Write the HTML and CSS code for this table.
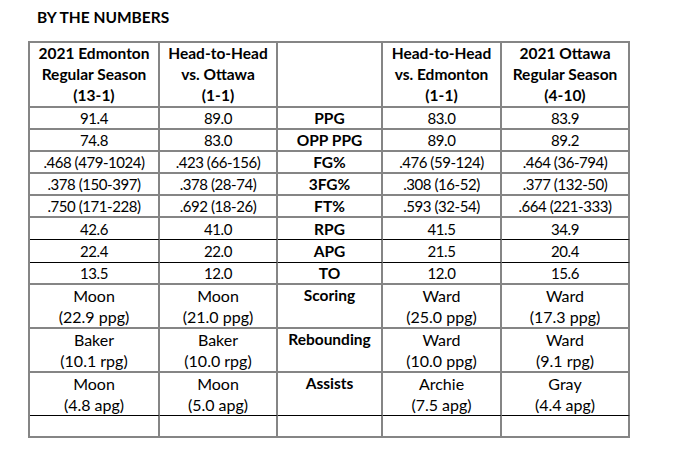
FILE: index.html
```html
<!DOCTYPE html>
<html>
<head>
<meta charset="utf-8">
<link rel="stylesheet" href="styles.css">
</head>
<body>
<div class="page">
  <h1 class="title">BY THE NUMBERS</h1>
  <table class="stats">
    <colgroup>
      <col class="c1"><col class="c2"><col class="c3"><col class="c4"><col class="c5">
    </colgroup>
    <tr class="head">
      <th>2021 Edmonton<br>Regular Season<br>(13-1)</th>
      <th>Head-to-Head<br>vs. Ottawa<br>(1-1)</th>
      <th></th>
      <th>Head-to-Head<br>vs. Edmonton<br>(1-1)</th>
      <th>2021 Ottawa<br>Regular Season<br>(4-10)</th>
    </tr>
    <tr class="row"><td>91.4</td><td>89.0</td><td class="lbl">PPG</td><td>83.0</td><td>83.9</td></tr>
    <tr class="row"><td>74.8</td><td>83.0</td><td class="lbl">OPP PPG</td><td>89.0</td><td>89.2</td></tr>
    <tr class="row"><td>.468 (479-1024)</td><td>.423 (66-156)</td><td class="lbl">FG%</td><td>.476 (59-124)</td><td>.464 (36-794)</td></tr>
    <tr class="row"><td>.378 (150-397)</td><td>.378 (28-74)</td><td class="lbl">3FG%</td><td>.308 (16-52)</td><td>.377 (132-50)</td></tr>
    <tr class="row"><td>.750 (171-228)</td><td>.692 (18-26)</td><td class="lbl">FT%</td><td>.593 (32-54)</td><td>.664 (221-333)</td></tr>
    <tr class="row dk"><td>42.6</td><td>41.0</td><td class="lbl">RPG</td><td>41.5</td><td>34.9</td></tr>
    <tr class="row dk tall"><td>22.4</td><td>22.0</td><td class="lbl">APG</td><td>21.5</td><td>20.4</td></tr>
    <tr class="row"><td>13.5</td><td>12.0</td><td class="lbl">TO</td><td>12.0</td><td>15.6</td></tr>
    <tr class="big"><td>Moon<br>(22.9 ppg)</td><td>Moon<br>(21.0 ppg)</td><td class="lbl">Scoring</td><td>Ward<br>(25.0 ppg)</td><td>Ward<br>(17.3 ppg)</td></tr>
    <tr class="big"><td>Baker<br>(10.1 rpg)</td><td>Baker<br>(10.0 rpg)</td><td class="lbl">Rebounding</td><td>Ward<br>(10.0 ppg)</td><td>Ward<br>(9.1 rpg)</td></tr>
    <tr class="big dk"><td>Moon<br>(4.8 apg)</td><td>Moon<br>(5.0 apg)</td><td class="lbl">Assists</td><td>Archie<br>(7.5 apg)</td><td>Gray<br>(4.4 apg)</td></tr>
    <tr class="row"><td></td><td></td><td></td><td></td><td></td></tr>
  </table>
</div>
</body>
</html>
```

FILE: styles.css
```css
html, body {
  margin: 0;
  padding: 0;
  background: #ffffff;
}

body {
  font-family: Lato, "Open Sans", sans-serif;
  color: #000;
}

.page {
  padding: 7px 0 0 28px;
}

.title {
  margin: 0 0 12px 9px;
  font-size: 15.5px;
  line-height: 21.5px;
  font-weight: bold;
}

.stats {
  border-collapse: separate;
  border-spacing: 0;
  table-layout: fixed;
  width: 602px;
  border-top: 2px solid #858585;
  border-left: 2px solid #858585;
  font-size: 16px;
}

.c1 { width: 130px; }
.c2 { width: 118px; }
.c3 { width: 105px; }
.c4 { width: 119px; }
.c5 { width: 128px; }

.stats th,
.stats td {
  box-sizing: border-box;
  padding: 0;
  text-align: center;
  border-right: 2px solid #858585;
  border-bottom: 2px solid #858585;
  overflow: hidden;
  white-space: nowrap;
}

.stats th {
  font-size: 15.5px;
  font-weight: bold;
  vertical-align: top;
  line-height: 21.2px;
  height: 65px;
}

.row td {
  height: 22px;
  font-size: 15px;
  letter-spacing: -0.45px;
  line-height: 20px;
  vertical-align: middle;
}

.row.tall td {
  height: 23px;
}

.big td {
  height: 43px;
  line-height: 21px;
  vertical-align: top;
}

.stats .lbl {
  font-size: 15.5px;
  letter-spacing: 0;
  font-weight: bold;
}

.dk td {
  border-bottom: 1px solid #000;
}
```
